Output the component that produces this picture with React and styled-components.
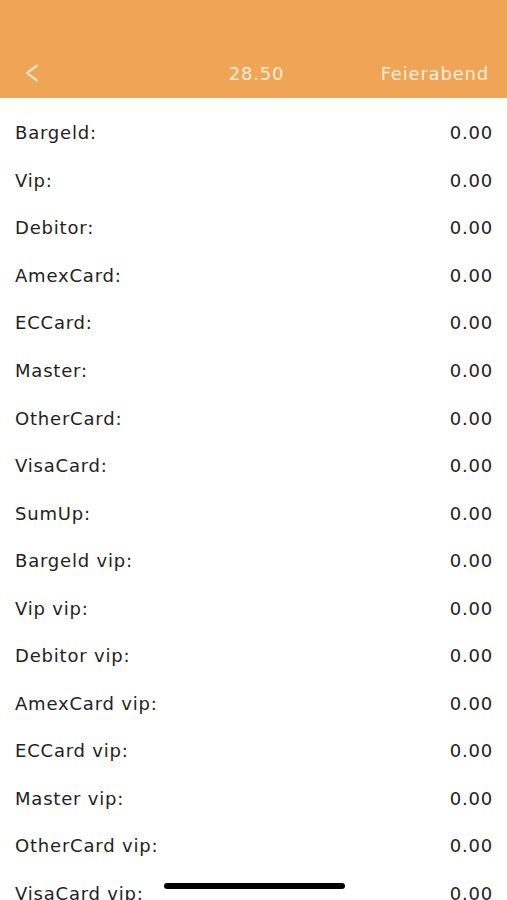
import React from "react";
import styled, { createGlobalStyle } from "styled-components";

const Global = createGlobalStyle`
  html, body { margin: 0; padding: 0; background: #ffffff; }
  body { overflow: hidden; }
  #root { height: 900px; }
`;

const Screen = styled.div`
  position: relative;
  width: 507px;
  height: 900px;
  overflow: hidden;
  background: #ffffff;
  font-family: "DejaVu Sans", "Liberation Sans", sans-serif;
  font-size: 18px;
  letter-spacing: 0.8px;
`;

const Header = styled.header`
  height: 98px;
  background: #efa456;
  display: flex;
  flex-direction: column;
  justify-content: flex-end;
`;

const NavBar = styled.div`
  height: 50px;
  display: grid;
  grid-template-columns: 1fr auto 1fr;
  align-items: center;
  padding: 0 18px 0 24px;
  color: #fdeedd;
`;

const Back = styled.div`
  display: flex;
  align-items: center;
`;

const Title = styled.div`
  text-align: center;
`;

const Action = styled.div`
  text-align: right;
`;

const List = styled.div`
  padding-top: 11px;
  display: flex;
  flex-direction: column;
`;

const Row = styled.div`
  height: 47.56px;
  flex: none;
  display: flex;
  align-items: center;
  justify-content: space-between;
  padding: 0 14px 0 15px;
  color: #222222;
`;

const HomeIndicator = styled.div`
  position: absolute;
  left: 164px;
  bottom: 11px;
  width: 181px;
  height: 6px;
  border-radius: 3px;
  background: #000000;
`;

const labels = [
  "Bargeld", "Vip", "Debitor", "AmexCard", "ECCard", "Master", "OtherCard",
  "VisaCard", "SumUp", "Bargeld vip", "Vip vip", "Debitor vip", "AmexCard vip",
  "ECCard vip", "Master vip", "OtherCard vip", "VisaCard vip", "SumUp vip",
];

export default function App() {
  return (
    <Screen>
      <Global />
      <Header>
        <NavBar>
          <Back>
            <svg width="16" height="18" viewBox="0 0 16 18">
              <path d="M13 1.5 L3 9 L13 16.5" fill="none" stroke="#fdeedd" strokeWidth="2" strokeLinecap="round" strokeLinejoin="round" />
            </svg>
          </Back>
          <Title>28.50</Title>
          <Action>Feierabend</Action>
        </NavBar>
      </Header>
      <List>
        {labels.map((l) => (
          <Row key={l}>
            <span>{l}:</span>
            <span>0.00</span>
          </Row>
        ))}
      </List>
      <HomeIndicator />
    </Screen>
  );
}
